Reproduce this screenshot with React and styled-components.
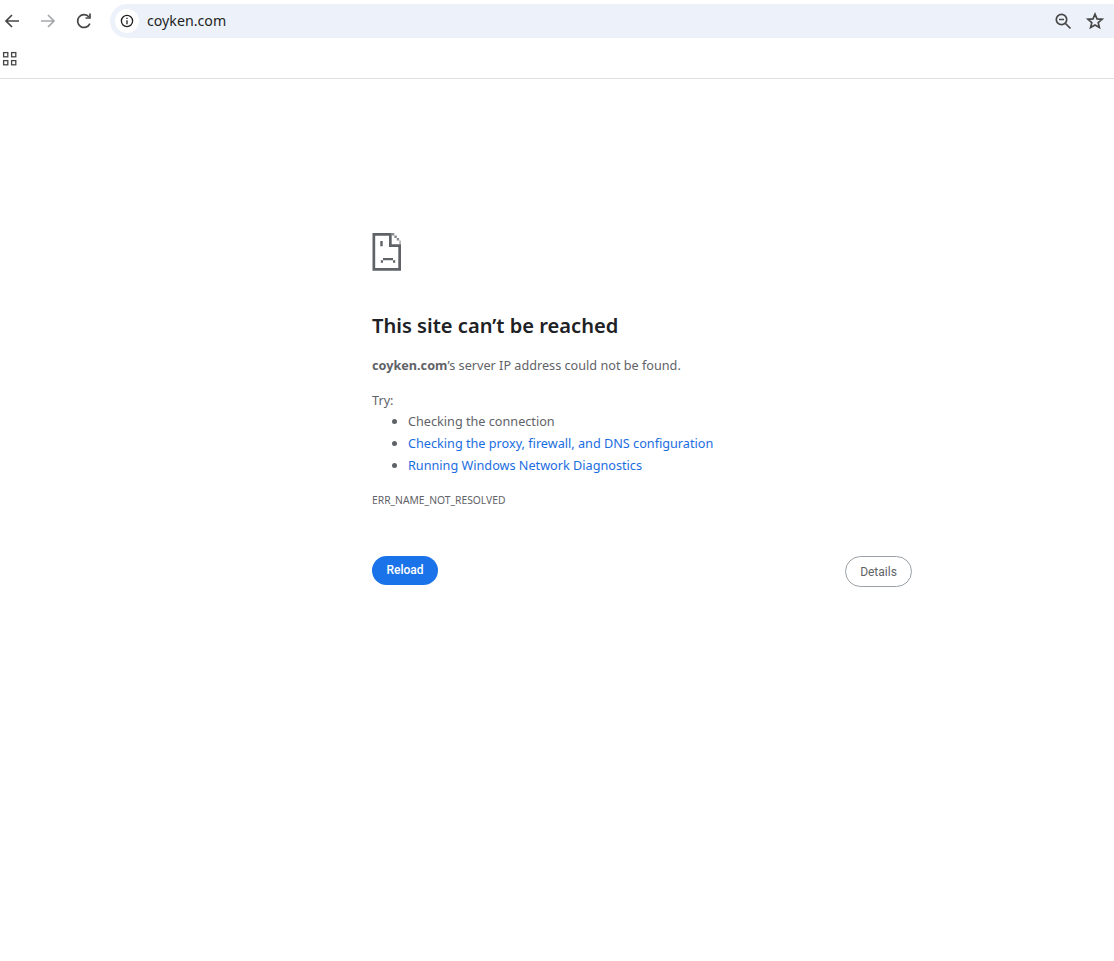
import React from 'react'
import styled, { createGlobalStyle } from 'styled-components'

const Global = createGlobalStyle`
  html, body { margin: 0; padding: 0; background: #fff; }
  body { font-family: "Noto Sans", "Open Sans", sans-serif; }
`

const Toolbar = styled.div`
  display: flex;
  align-items: center;
  height: 42px;
  box-sizing: border-box;
  overflow: hidden;
`

const NavGroup = styled.div`
  display: flex;
  align-items: center;
  width: 110px;
  flex: none;
  box-sizing: border-box;
  gap: 12px;
`

const NavIcon = styled.svg`
  width: 24px;
  height: 24px;
  flex: none;
  fill: none;
  stroke: ${p => p.$muted ? '#a5a7aa' : '#474747'};
  stroke-width: 1.7;
`

const Omnibox = styled.div`
  flex: 1;
  height: 34px;
  margin-right: -20px;
  padding: 0 27px 0 5px;
  display: flex;
  align-items: center;
  background: #edf2fa;
  border-radius: 17px;
`

const InfoBadge = styled.div`
  width: 24px;
  height: 24px;
  border-radius: 50%;
  background: #fff;
  display: flex;
  align-items: center;
  justify-content: center;
  flex: none;
`

const UrlText = styled.span`
  margin-left: 8px;
  padding-bottom: 2px;
  flex: 1;
  font-size: 14.2px;
  color: #1f1f1f;
`

const OmniActions = styled.div`
  display: flex;
  align-items: center;
  gap: 8px;
`

const BookmarksBar = styled.div`
  height: 37px;
  box-sizing: border-box;
  border-bottom: 1px solid #dedfe0;
  padding: 8px 0 0 2px;
`

const Main = styled.main`
  padding: 154px 0 0 372px;
  width: 540px;
`

const ErrorIcon = styled.svg`
  display: block;
  width: 30px;
  height: 38px;
  fill: #5f6368;
`

const Heading = styled.h1`
  margin: 41px 0 0;
  font-size: 20.1px;
  line-height: 28px;
  font-weight: 600;
  color: #202124;
`

const Summary = styled.p`
  margin: 14px 0 0;
  font-size: 12.67px;
  line-height: 22px;
  color: #5f6368;
  b { font-weight: 700; }
`

const TryLabel = styled.div`
  margin-top: 13px;
  font-size: 12.67px;
  line-height: 22px;
  color: #5f6368;
`

const TryList = styled.ul`
  margin: -1px 0 0;
  padding: 0 0 0 36px;
  list-style: disc;
  color: #5f6368;
`

const TryItem = styled.li`
  font-size: 12.67px;
  line-height: 22px;
  color: ${p => p.$link ? '#1a6ddf' : '#5f6368'};
  &::marker { color: #5f6368; }
`

const ErrorCode = styled.div`
  margin-top: 17px;
  font-size: 10.3px;
  line-height: 14px;
  color: #5f6368;
`

const Buttons = styled.div`
  margin-top: 49px;
  display: flex;
  justify-content: space-between;
  align-items: flex-start;
`

const Pill = styled.button`
  font-family: Roboto, sans-serif;
  font-size: 12px;
  font-weight: ${p => p.$primary ? 500 : 400};
  box-sizing: border-box;
  padding: 0;
  cursor: pointer;
  border-radius: 16px;
  width: ${p => p.$primary ? '66px' : '67px'};
  height: ${p => p.$primary ? '29px' : '31px'};
  padding-bottom: ${p => p.$primary ? '1px' : '0'};
  background: ${p => p.$primary ? '#1a73e8' : '#fff'};
  color: ${p => p.$primary ? '#fff' : '#5f6368'};
  border: ${p => p.$primary ? 'none' : '1px solid #9aa0a6'};
`

const App = () => {
  return (
    <>
      <Global />
      <Toolbar>
        <NavGroup>
          <NavIcon viewBox="0 0 24 24"><path d="M19 12H6M12 6l-6 6 6 6" /></NavIcon>
          <NavIcon viewBox="0 0 24 24" $muted><path d="M5 12h13M12 6l6 6-6 6" /></NavIcon>
          <NavIcon viewBox="0 0 24 24">
            <path d="M17.900 14.600A6.400 6.400 0 1 1 17 8" />
            <path d="M18 4.500V9h-4.500" />
          </NavIcon>
        </NavGroup>
        <Omnibox>
          <InfoBadge>
            <svg width="14" height="14" viewBox="0 0 14 14" fill="none" stroke="#1f1f1f" strokeWidth="1.300">
              <circle cx="7" cy="7" r="5.600" />
              <path d="M7 6.200v4M7 3.800v1.300" />
            </svg>
          </InfoBadge>
          <UrlText>coyken.com</UrlText>
          <OmniActions>
            <NavIcon viewBox="0 0 24 24">
              <circle cx="10.500" cy="10.500" r="5.200" />
              <path d="M14.500 14.500l5 5M8 10.500h5" />
            </NavIcon>
            <NavIcon viewBox="0 0 24 24">
              <path d="M12 5.200l2 4.700 5.100.4-3.900 3.300 1.200 5L12 16l-4.400 2.600 1.200-5-3.900-3.300 5.100-.4z" />
            </NavIcon>
          </OmniActions>
        </Omnibox>
      </Toolbar>
      <BookmarksBar>
        <svg width="16" height="16" viewBox="0 0 16 16" fill="none" stroke="#474747" strokeWidth="1.300">
          <rect x="1.600" y="1.600" width="4.200" height="4.200" />
          <rect x="9.600" y="1.600" width="4.200" height="4.200" />
          <rect x="1.600" y="9.600" width="4.200" height="4.200" />
          <rect x="9.600" y="9.600" width="4.200" height="4.200" />
        </svg>
      </BookmarksBar>
      <Main>
        <ErrorIcon viewBox="0 0 30 38">
          <path d="M.5 0H17v2.700H3.200v32.300h23.100V14H29v23.700H.5z" />
          <path d="M17 0h2.700v11.300H29V14H17z" />
          <path d="M19.700 0h2.600v2.400h-2.600zM22.300 2.400h2.500v2.500h-2.500zM24.800 4.900h2.300v2.500h-2.300z" opacity=".75" />
          <path d="M27.100 7.400H29v3.900h-1.900z" opacity=".45" />
          <path d="M8.300 8h2.400v5.300H8.300zM11 25h10v2.300H11zM8.800 27.300H11v2.400H8.800zM21 27.300h2.200v2.400H21z" />
        </ErrorIcon>
        <Heading>This site can’t be reached</Heading>
        <Summary><b>coyken.com</b>’s server IP address could not be found.</Summary>
        <TryLabel>Try:</TryLabel>
        <TryList>
          <TryItem>Checking the connection</TryItem>
          <TryItem $link>Checking the proxy, firewall, and DNS configuration</TryItem>
          <TryItem $link>Running Windows Network Diagnostics</TryItem>
        </TryList>
        <ErrorCode>ERR_NAME_NOT_RESOLVED</ErrorCode>
        <Buttons>
          <Pill $primary>Reload</Pill>
          <Pill>Details</Pill>
        </Buttons>
      </Main>
    </>
  )
}

export default App
